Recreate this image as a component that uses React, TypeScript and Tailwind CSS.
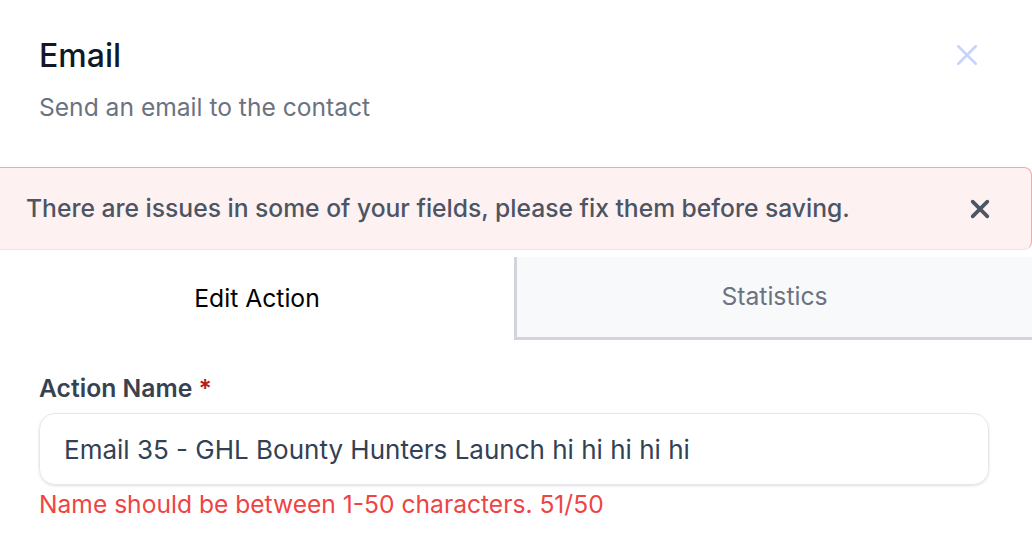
import React from 'react';

export default function App() {
  return (
    <div className="w-[1032px] h-[556px] bg-white overflow-hidden" style={{ fontFamily: 'Inter, "Noto Sans", sans-serif' }}>
      {/* Header */}
      <div className="flex items-start justify-between pl-[39px] pr-[50px] pt-[36px]">
        <div>
          <h1 className="text-[32px] leading-[40px] font-medium text-[#111827]">Email</h1>
          <p className="mt-[15px] text-[24.6px] leading-[32px] text-[#6b7280]">Send an email to the contact</p>
        </div>
        <button className="mt-[4px] text-[#c7d2fe]">
          <svg width="30" height="30" viewBox="0 0 24 24" fill="none" stroke="currentColor" strokeWidth="2" strokeLinecap="round">
            <path d="M5 5l14 14M19 5L5 19" />
          </svg>
        </button>
      </div>

      {/* Alert */}
      <div className="mt-[44px] h-[83px] flex items-center justify-between bg-[#fef1f2] border-t border-r border-[#f3a9ab] border-b-[#e5e7eb] border-b rounded-r-[8px] pl-[26px] pr-[40px]">
        <span className="text-[24.65px] font-medium text-[#4b5563]">There are issues in some of your fields, please fix them before saving.</span>
        <svg width="22" height="22" viewBox="0 0 24 24" fill="none" stroke="#4b5563" strokeWidth="4" strokeLinecap="round">
          <path d="M4 4l16 16M20 4L4 20" />
        </svg>
      </div>

      {/* Tabs */}
      <div className="mt-[7px] flex h-[83px]">
        <div className="w-[514px] flex items-center justify-center text-[24.7px] text-black">Edit Action</div>
        <div className="flex-1 flex items-center justify-center bg-[#f8f9fb] border-l-[3px] border-b-[3px] border-[#d1d5db] text-[24.7px] text-[#6b7280]">Statistics</div>
      </div>

      {/* Form */}
      <div className="pl-[39px] pr-[43px] pt-[32px]">
        <label className="block text-[24.7px] leading-[32px] font-semibold text-[#374151]">
          Action Name <span className="text-[#b91c1c]">*</span>
        </label>
        <div className="mt-[9px] h-[72px] flex items-center rounded-[16px] border border-[#e5e7eb] shadow-sm px-[24px] text-[26px] text-[#334155]">
          Email 35 - GHL Bounty Hunters Launch hi hi hi hi hi
        </div>
        <p className="mt-[1px] text-[24.6px] leading-[36px] text-[#ef4444]">Name should be between 1-50 characters. 51/50</p>
      </div>
    </div>
  );
}
